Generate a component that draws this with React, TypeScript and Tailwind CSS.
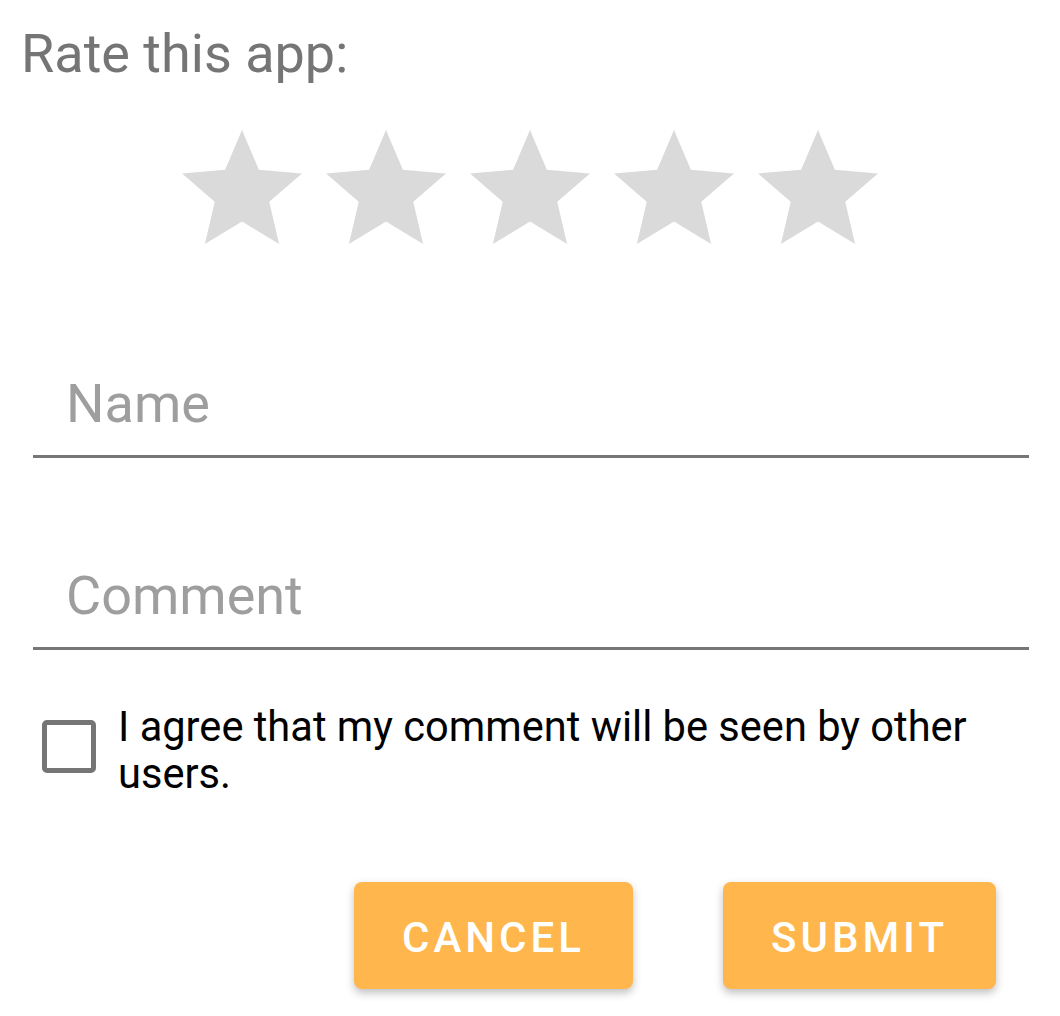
import React, { useState } from 'react';

const Star: React.FC = () => (
  <svg viewBox="0 0 24 24" className="w-[144px] h-[144px] shrink-0" fill="#dadada">
    <path d="M12 17.27L18.18 21l-1.64-7.03L22 9.24l-7.19-.61L12 2 9.19 8.63 2 9.24l5.46 4.73L5.82 21z" />
  </svg>
);

export default function App() {
  const [agreed, setAgreed] = useState(false);

  return (
    <div className="w-[1060px] h-[1016px] bg-white font-['Roboto',sans-serif] flex flex-col">
      {/* Title */}
      <h1 className="pt-[22px] pl-[21px] text-[54px] leading-[64px] text-[#757575] font-normal">
        Rate this app:
      </h1>

      {/* Stars */}
      <div className="mt-[32px] flex justify-center">
        {[0, 1, 2, 3, 4].map((i) => (
          <Star key={i} />
        ))}
      </div>

      {/* Fields */}
      <div className="mx-[33px] mt-[112px] w-[996px] border-b-[3px] border-[#777777] pb-[21px] pl-[33px]">
        <span className="block text-[54px] leading-[60px] text-[#9e9e9e]">Name</span>
      </div>
      <div className="mx-[33px] mt-[108px] w-[996px] border-b-[3px] border-[#777777] pb-[21px] pl-[33px]">
        <span className="block text-[54px] leading-[60px] text-[#9e9e9e]">Comment</span>
      </div>

      {/* Agreement */}
      <label className="mt-[53px] ml-[42px] flex items-start gap-[22px] cursor-pointer">
        <button
          type="button"
          onClick={() => setAgreed(!agreed)}
          className="mt-[17px] w-[54px] h-[53px] shrink-0 rounded-[5px] border-[5px] border-[#757575] bg-white"
        />
        <span className="w-[880px] text-[41.6px] leading-[47px] text-black">
          I agree that my comment will be seen by other users.
        </span>
      </label>

      {/* Actions */}
      <div className="mt-[85px] flex justify-end pr-[64px] gap-[90px]">
        <button className="w-[279px] h-[107px] pt-[4px] rounded-[8px] bg-[#ffb74d] text-white text-[42px] font-medium tracking-[0.095em] shadow-[0_4px_8px_rgba(0,0,0,0.25)]">
          CANCEL
        </button>
        <button className="w-[273px] h-[107px] pt-[4px] rounded-[8px] bg-[#ffb74d] text-white text-[42px] font-medium tracking-[0.095em] shadow-[0_4px_8px_rgba(0,0,0,0.25)]">
          SUBMIT
        </button>
      </div>
    </div>
  );
}
